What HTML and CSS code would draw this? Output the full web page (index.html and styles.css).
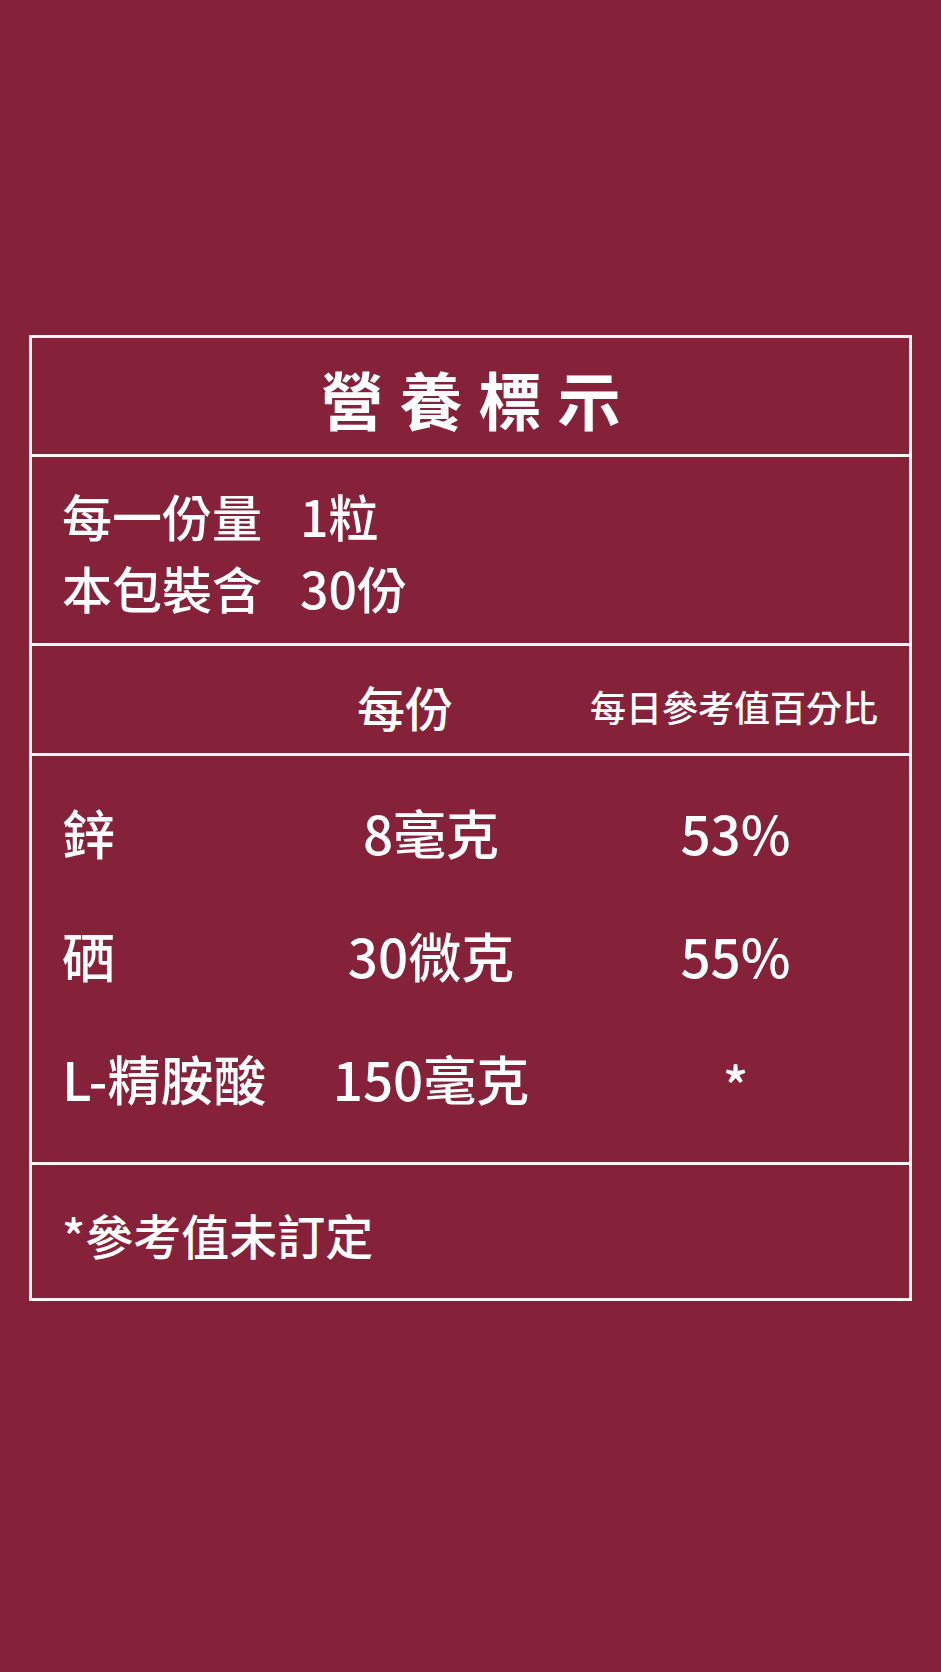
FILE: index.html
```html
<!DOCTYPE html>
<html lang="zh-Hant">
<head>
<meta charset="utf-8">
<title>營養標示</title>
<link rel="stylesheet" href="styles.css">
</head>
<body>
<div class="page">
  <div class="label">
    <div class="sec title">營養標示</div>
    <div class="sec serving">
      <div class="srow"><span class="sk">每一份量</span><span class="sv">1粒</span></div>
      <div class="srow"><span class="sk">本包裝含</span><span class="sv">30份</span></div>
    </div>
    <div class="sec head">
      <span></span>
      <span class="h1">每份</span>
      <span class="h2">每日參考值百分比</span>
    </div>
    <div class="sec rows">
      <div class="row"><span class="n">鋅</span><span class="v">8毫克</span><span class="p">53%</span></div>
      <div class="row"><span class="n">硒</span><span class="v">30微克</span><span class="p">55%</span></div>
      <div class="row"><span class="n">L-精胺酸</span><span class="v">150毫克</span><span class="p"><span class="ast">*</span></span></div>
    </div>
    <div class="sec foot"><span class="ast">*</span>參考值未訂定</div>
  </div>
</div>
</body>
</html>
```

FILE: styles.css
```css
html, body {
  margin: 0;
  padding: 0;
  background: #852239;
}
body {
  font-family: "Noto Sans CJK TC", "Noto Sans CJK SC", "Noto Sans", sans-serif;
  color: #ffffff;
}
.page {
  height: 1672px;
  padding-top: 335px;
  box-sizing: border-box;
}
.label {
  margin-left: 29px;
  width: 883px;
  box-sizing: border-box;
  border: 3px solid #fdf6f7;
}
.sec {
  border-bottom: 3px solid #fdf6f7;
  box-sizing: border-box;
}
.sec:last-child {
  border-bottom: none;
}
.title {
  height: 119px;
  display: flex;
  align-items: center;
  justify-content: center;
  font-size: 63px;
  font-weight: 700;
  letter-spacing: 16px;
  padding-left: 16px;
  padding-top: 2px;
}
.serving {
  height: 189px;
  padding: 22px 0 0 30px;
  font-size: 50px;
  font-weight: 500;
}
.srow {
  display: grid;
  grid-template-columns: 238px auto;
  line-height: 72px;
}
.head {
  height: 110px;
  display: grid;
  grid-template-columns: 295px 233px 1fr;
  align-items: center;
  padding: 16px 0 3px 30px;
}
.h1 {
  font-size: 48px;
  font-weight: 500;
}
.h2 {
  font-size: 36px;
  font-weight: 500;
}
.rows {
  height: 409px;
  padding: 15px 0 0 30px;
  font-size: 53px;
  font-weight: 500;
}
.row {
  display: grid;
  grid-template-columns: 238px 262px 1fr;
  line-height: 123px;
}
.v, .p {
  text-align: center;
}
.ast {
  display: inline-block;
  vertical-align: -0.12em;
}
.foot {
  height: 133px;
  display: flex;
  align-items: center;
  padding: 4px 0 0 30px;
  font-size: 48px;
  font-weight: 500;
}
```
